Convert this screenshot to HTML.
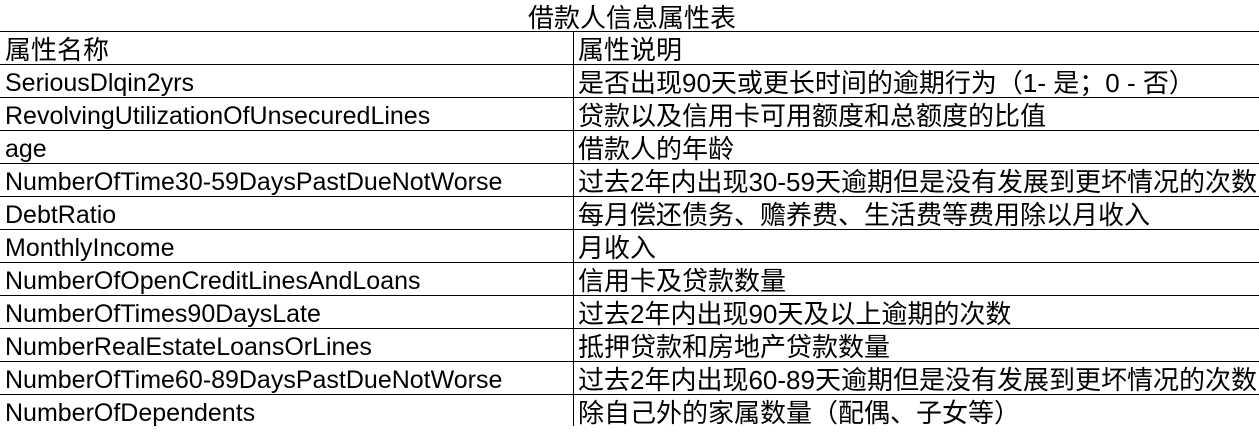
<html><head><style>
body{margin:0;width:1259px;height:426px;background:#fff;overflow:hidden;font-family:"Liberation Sans","Noto Sans CJK SC",sans-serif;font-size:26px;color:#000;position:relative}
.t{position:absolute;top:0;left:0;width:1264px;height:31px;text-align:center;line-height:37px}
.r{position:absolute;left:0;width:1259px;height:33px;border-top:1px solid #000;box-sizing:border-box}
.r div{position:absolute;top:0;line-height:37px;white-space:nowrap}
.a{left:5px;font-size:25px}.b{left:578px}
.v{position:absolute;left:573px;top:31px;width:1px;height:395px;background:#000}
</style></head><body>
<div class="t">借款人信息属性表</div>
<div class="r" style="top:31px"><div class="a" style="font-size:26px">属性名称</div><div class="b">属性说明</div></div>
<div class="r" style="top:64px"><div class="a">SeriousDlqin2yrs</div><div class="b">是否出现90天或更长时间的逾期行为（1- 是；0 - 否）</div></div>
<div class="r" style="top:97px"><div class="a">RevolvingUtilizationOfUnsecuredLines</div><div class="b">贷款以及信用卡可用额度和总额度的比值</div></div>
<div class="r" style="top:130px"><div class="a">age</div><div class="b">借款人的年龄</div></div>
<div class="r" style="top:163px"><div class="a">NumberOfTime30-59DaysPastDueNotWorse</div><div class="b">过去2年内出现30-59天逾期但是没有发展到更坏情况的次数</div></div>
<div class="r" style="top:196px"><div class="a">DebtRatio</div><div class="b">每月偿还债务、赡养费、生活费等费用除以月收入</div></div>
<div class="r" style="top:229px"><div class="a">MonthlyIncome</div><div class="b">月收入</div></div>
<div class="r" style="top:262px"><div class="a">NumberOfOpenCreditLinesAndLoans</div><div class="b">信用卡及贷款数量</div></div>
<div class="r" style="top:295px"><div class="a">NumberOfTimes90DaysLate</div><div class="b">过去2年内出现90天及以上逾期的次数</div></div>
<div class="r" style="top:328px"><div class="a">NumberRealEstateLoansOrLines</div><div class="b">抵押贷款和房地产贷款数量</div></div>
<div class="r" style="top:361px"><div class="a">NumberOfTime60-89DaysPastDueNotWorse</div><div class="b">过去2年内出现60-89天逾期但是没有发展到更坏情况的次数</div></div>
<div class="r" style="top:394px"><div class="a">NumberOfDependents</div><div class="b">除自己外的家属数量（配偶、子女等）</div></div>
<div class="v"></div>
</body></html>
